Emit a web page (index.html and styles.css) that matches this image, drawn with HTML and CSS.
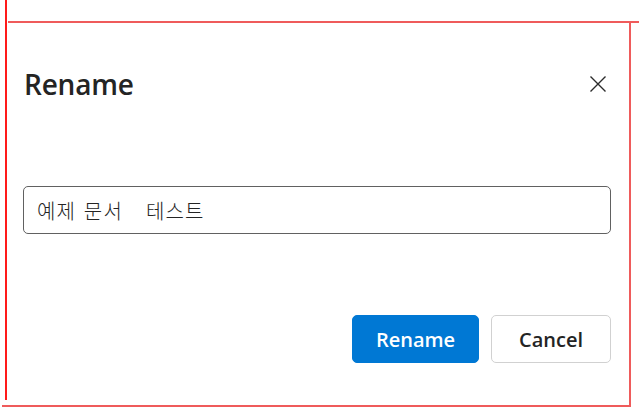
FILE: index.html
```html
<!DOCTYPE html>
<html lang="en">
<head>
<meta charset="utf-8">
<title>Rename</title>
<link rel="stylesheet" href="styles.css">
</head>
<body>
<div class="dialog">
  <div class="header">
    <h1 class="title">Rename</h1>
    <button class="close" aria-label="Close">
      <svg width="16" height="16" viewBox="0 0 16 16"><path d="M0.5 0.5L15.5 15.5M15.5 0.5L0.5 15.5" stroke="#2b2b2b" stroke-width="1.4" fill="none"/></svg>
    </button>
  </div>
  <div class="field">
    <input class="input" type="text" value="예제 문서   테스트">
  </div>
  <div class="actions">
    <button class="btn primary">Rename</button>
    <button class="btn secondary">Cancel</button>
  </div>
</div>
<div class="line line-left"></div>
<div class="line line-top"></div>
<div class="line line-right"></div>
<div class="line line-bottom"></div>
</body>
</html>
```
FILE: styles.css
```css
html, body {
  margin: 0;
  padding: 0;
  background: #fff;
}
body {
  width: 639px;
  height: 407px;
  position: relative;
  overflow: hidden;
  font-family: "Open Sans", "Noto Sans", sans-serif;
}
.dialog {
  padding: 66px 28px 0 23px;
  display: flex;
  flex-direction: column;
}
.header {
  display: flex;
  align-items: center;
  justify-content: space-between;
  height: 36px;
}
.title {
  margin: 0 0 0 1px;
  font-size: 28px;
  font-weight: 600;
  line-height: 36px;
  color: #242424;
  letter-spacing: -0.2px;
}
.close {
  width: 32px;
  height: 32px;
  border: none;
  background: transparent;
  padding: 0;
  margin-right: -3px;
  display: flex;
  align-items: center;
  justify-content: center;
}
.field {
  margin-top: 84px;
}
.input {
  box-sizing: border-box;
  width: 588px;
  height: 48px;
  border: 1px solid #616161;
  border-radius: 5px;
  padding: 0 13px;
  font-family: "Noto Sans CJK KR", "Open Sans", sans-serif;
  font-size: 20px;
  font-weight: 300;
  letter-spacing: 1.2px;
  word-spacing: 2px;
  color: #242424;
  outline: none;
  background: #fff;
}
.actions {
  margin-top: 81px;
  display: flex;
  justify-content: flex-end;
  gap: 12px;
}
.btn {
  box-sizing: border-box;
  height: 48px;
  border-radius: 5px;
  font-family: "Open Sans", "Noto Sans", sans-serif;
  font-size: 20px;
  font-weight: 600;
  padding: 0;
}
.primary {
  width: 127px;
  background: #0078d4;
  color: #fff;
  border: 1px solid #0078d4;
}
.secondary {
  width: 120px;
  background: #fff;
  color: #242424;
  border: 1px solid #d1d1d1;
}
.line {
  position: absolute;
}
.line-left {
  left: 5px;
  top: 0;
  width: 2px;
  height: 400px;
  background: #ff1a1a;
}
.line-top {
  left: 8px;
  top: 21px;
  width: 631px;
  height: 2px;
  background: #ef5b5b;
}
.line-right {
  left: 629px;
  top: 22px;
  width: 2px;
  height: 385px;
  background: #ef5b5b;
}
.line-bottom {
  left: 2px;
  top: 405px;
  width: 628px;
  height: 2px;
  background: #ef5b5b;
}
```
